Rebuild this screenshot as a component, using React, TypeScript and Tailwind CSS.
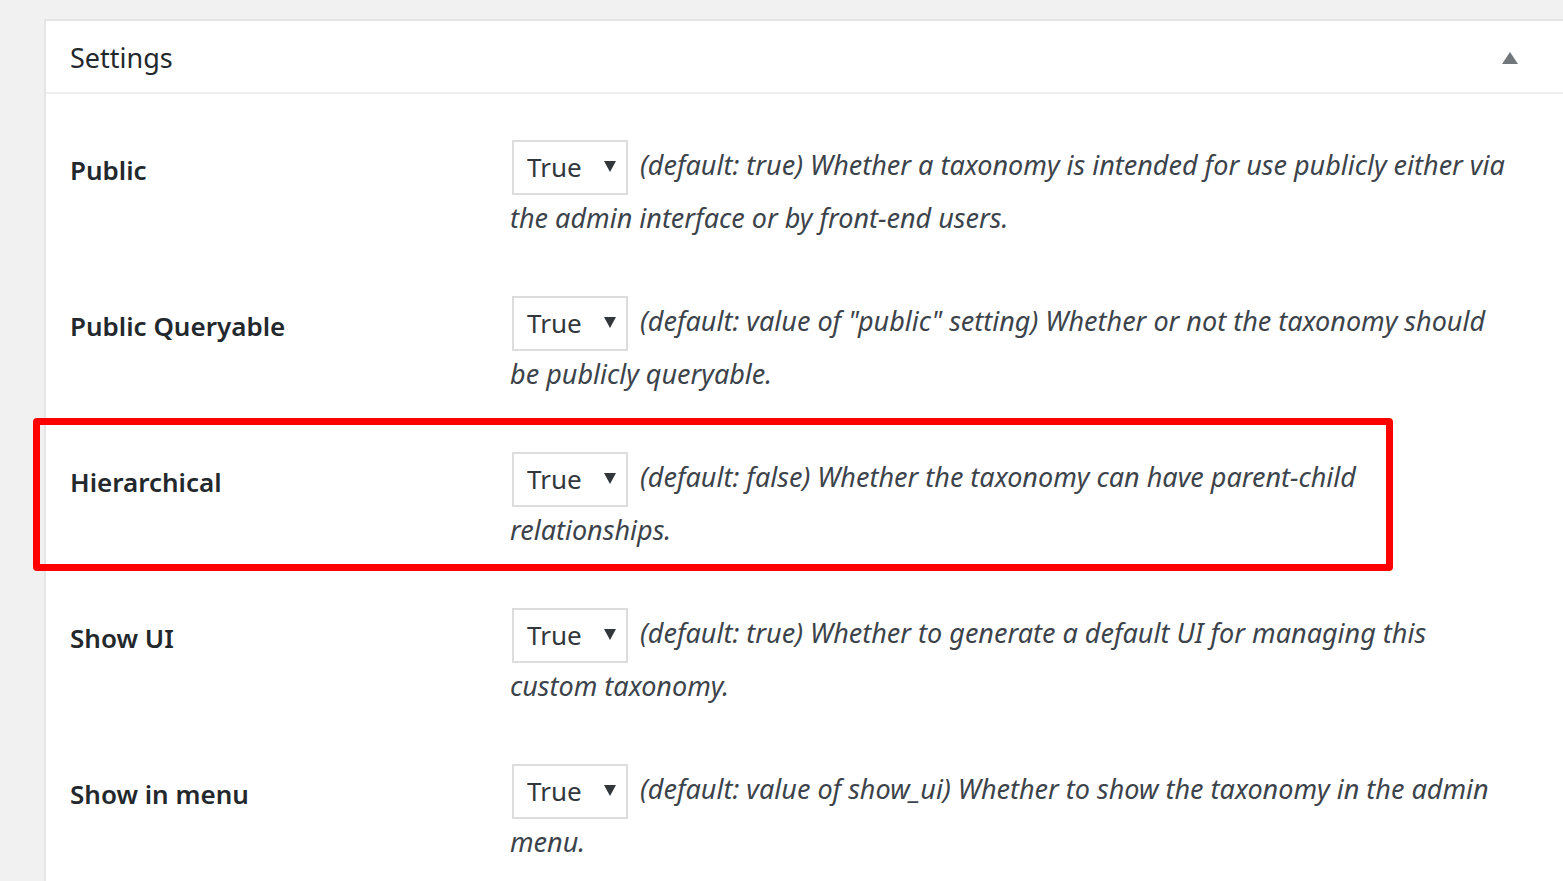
import React from "react";

const rows = [
  {
    label: "Public",
    first: "(default: true) Whether a taxonomy is intended for use publicly either via",
    second: "the admin interface or by front-end users.",
  },
  {
    label: "Public Queryable",
    first: '(default: value of "public" setting) Whether or not the taxonomy should',
    second: "be publicly queryable.",
  },
  {
    label: "Hierarchical",
    first: "(default: false) Whether the taxonomy can have parent-child",
    second: "relationships.",
  },
  {
    label: "Show UI",
    first: "(default: true) Whether to generate a default UI for managing this",
    second: "custom taxonomy.",
  },
  {
    label: "Show in menu",
    first: "(default: value of show_ui) Whether to show the taxonomy in the admin",
    second: "menu.",
  },
];

function FakeSelect() {
  return (
    <div className="flex h-[55px] w-[116px] shrink-0 items-center justify-between border-2 border-[#dddddd] bg-white pl-[13px] pr-[10px] text-[26px] not-italic text-[#32373c]">
      <span>True</span>
      <svg width="12" height="11" viewBox="0 0 12 11" className="-mt-[2px]">
        <polygon points="0,0 12,0 6,11" fill="#32373c" />
      </svg>
    </div>
  );
}

function Row({ label, first, second }: { label: string; first: string; second: string }) {
  return (
    <div className="flex py-[26px]">
      <div className="w-[464px] shrink-0 pl-[24px] pt-[3px] text-[26px] font-semibold leading-[52px] text-[#23282d]">
        {label}
      </div>
      <div className="text-[27px] italic text-[#3c434a]">
        <div className="flex h-[52px] items-center gap-[12px] pl-[2px]">
          <FakeSelect />
          <span className="-mt-[3px] whitespace-nowrap">{first}</span>
        </div>
        <div className="h-[52px] whitespace-nowrap leading-[50px]">{second}</div>
      </div>
    </div>
  );
}

export default function App() {
  return (
    <div
      className="relative min-h-screen overflow-hidden bg-[#f1f1f1] pl-[44px] pt-[19px]"
      style={{ fontFamily: '"Noto Sans", "Open Sans", sans-serif' }}
    >
      <div className="w-[1600px] border-2 border-[#e5e5e5] bg-white">
        {/* header */}
        <div className="flex h-[73px] items-center justify-between border-b-2 border-[#eeeeee] pl-[24px] pr-[124px]">
          <h2 className="pt-[4px] text-[27px] text-[#23282d]">Settings</h2>
          <svg width="16" height="12" viewBox="0 0 16 12" className="mt-[2px]">
            <polygon points="8,0 16,12 0,12" fill="#72777c" />
          </svg>
        </div>

        <div className="pt-[21px]">
          {rows.map((r) => (
            <Row key={r.label} {...r} />
          ))}
        </div>
      </div>

      {/* annotation */}
      <div className="pointer-events-none absolute left-[33px] top-[418px] h-[153px] w-[1360px] rounded-[4px] border-[7px] border-[#ff0000]" />
    </div>
  );
}
